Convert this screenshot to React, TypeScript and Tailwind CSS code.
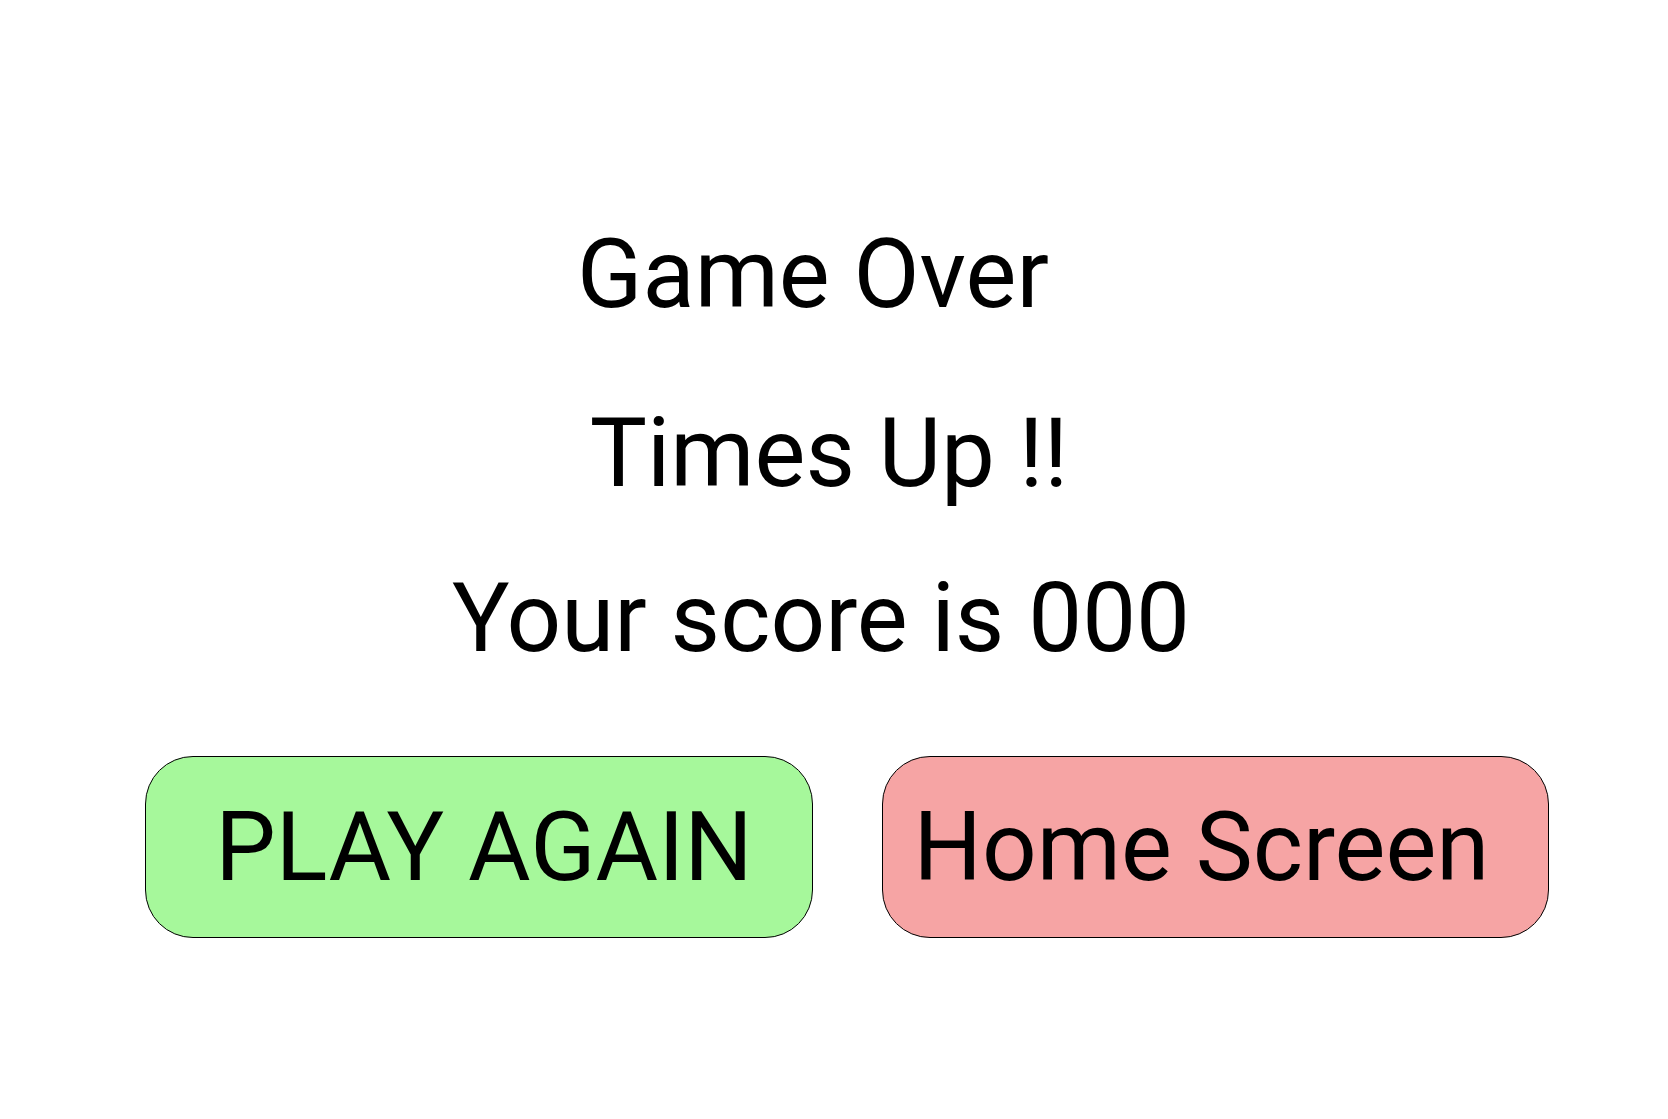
import React from 'react';

const GameOver: React.FC = () => {
  return (
    <div className="min-h-screen w-full bg-white text-black font-['Roboto',sans-serif]">
      <div className="flex flex-col items-center pt-[226px]">
        <h1 className="pr-[42px] text-[96px] leading-none font-normal">Game Over</h1>
        <p className="mt-[83px] pr-[10px] text-[96px] leading-none">Times Up !!</p>
        <p className="mt-[69px] pr-[26px] text-[96px] leading-none">Your score is 000</p>
      </div>
      <div className="mt-[90px] flex justify-center gap-[69px] pl-[25px]">
        <button className="h-[182px] w-[668px] rounded-[48px] border border-black bg-[#a6f89b] pl-[11px] text-[96px] leading-none text-black">
          PLAY AGAIN
        </button>
        <button className="h-[182px] w-[667px] rounded-[48px] border border-black bg-[#f6a4a4] pl-[31px] text-left text-[96px] leading-none text-black">
          Home Screen
        </button>
      </div>
    </div>
  );
};

export default function App() {
  return <GameOver />;
}
